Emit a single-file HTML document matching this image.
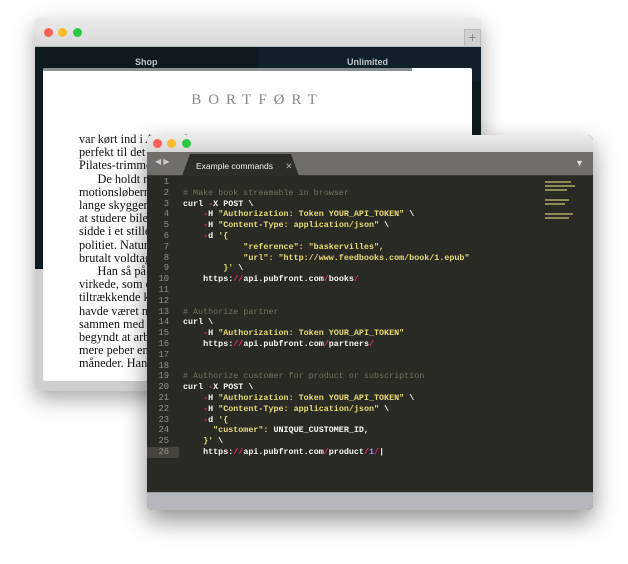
<!DOCTYPE html>
<html><head><meta charset="utf-8"><style>
*{margin:0;padding:0;box-sizing:border-box}
body{width:628px;height:564px;background:#fff;position:relative;overflow:hidden;font-family:"Liberation Sans",sans-serif}
.back{position:absolute;left:35px;top:18px;width:446px;height:373px;background:#cfcfcf;border-radius:5px;box-shadow:0 8px 22px rgba(0,0,0,.35);overflow:hidden}
.tb{height:29px;background:linear-gradient(#ececec,#d8d8d8);border-bottom:1px solid #b8b8b8;position:relative}
.dot{position:absolute;width:9px;height:9px;border-radius:50%}
.nav{position:absolute;left:0;top:29px;width:446px;height:222px;background:#0f1a1e}
.nav .r{position:absolute;left:223px;top:0;width:223px;height:35px;background:#112028}
.nav span{position:absolute;top:10px;color:#bfc5c8;font-size:9px;font-weight:bold}
.page{position:absolute;left:8px;top:50px;width:429px;height:313px;background:#fff;border-radius:2px;overflow:hidden}
.prog{position:absolute;left:0;top:0;width:369px;height:3px;background:#8a8f93}
.title{position:absolute;top:24px;width:100%;text-align:center;font-family:"Liberation Serif",serif;font-size:15px;letter-spacing:7px;color:#888}
.txt{position:absolute;left:36px;top:65px;font-family:"Liberation Serif",serif;font-size:12.3px;line-height:13.2px;color:#111;white-space:pre}
.front{position:absolute;left:147px;top:135px;width:446px;height:375px;border-radius:5px;overflow:hidden;box-shadow:0 10px 25px rgba(0,0,0,.45);background:#272822}
.ftb{height:17px;background:linear-gradient(#ececec,#d6d6d6);position:relative}
.tabs{height:24px;background:#6f6e68;position:relative;border-bottom:1px solid #3a3a34}
.tab{position:absolute;left:35px;top:2px;width:117px;height:22px;background:#2c2d27;clip-path:polygon(8px 0,109px 0,117px 22px,0 22px);color:#eee;font-size:8.5px;padding:7px 0 0 14px}
.ed{position:absolute;left:0;top:41px;width:446px;height:316px;background:#2a2a25;font-family:"Liberation Mono",monospace;font-size:8.4px;line-height:10.8px}
.ln{position:absolute;left:0;top:1px;width:22px;text-align:right;color:#8f908a;white-space:pre;font-size:8.8px}
.code{position:absolute;left:36px;top:1px;color:#f8f8f2;white-space:pre;font-weight:bold}
.c{color:#75715e;font-weight:normal}.s{color:#e6db74}.p{color:#f92672}.v{color:#ae81ff}
.status{position:absolute;left:0;bottom:0;width:446px;height:18px;background:#b4b8bc;border-top:1px solid #999}
.hl{position:absolute;left:0;top:271px;width:32px;height:11px;background:#45443c}
</style></head><body>
<div class="back">
 <div class="tb">
  <div class="dot" style="left:9px;top:10px;background:#fc5f57"></div>
  <div class="dot" style="left:23px;top:10px;background:#fdbc2e"></div>
  <div class="dot" style="left:38px;top:10px;background:#29c840"></div>
  <div style="position:absolute;right:0;top:11px;width:17px;height:18px;background:#d0d0d0;border:1px solid #bbb;color:#888;font-size:14px;line-height:15px;text-align:center">+</div>
 </div>
 <div class="nav"><div class="r"></div><span style="left:100px">Shop</span><span style="left:312px">Unlimited</span></div>
 <div class="page"><div class="prog"></div>
  <div class="title">BORTFØRT</div>
  <div class="txt">var kørt ind i Amagerbro ... 
perfekt til det s
Pilates-trimmet
      De holdt nø
motionsløbernes
lange skygger b
at studere bilen
sidde i et stilles
politiet. Naturli
brutalt voldtage
      Han så på A
virkede, som o
tiltrækkende kv
havde været ne
sammen med h
begyndt at arbe
mere peber end
måneder. Han v</div>
 </div>
</div>
<div class="front">
 <div class="ftb">
  <div class="dot" style="left:6px;top:4px;background:#fc5f57"></div>
  <div class="dot" style="left:20px;top:4px;background:#fdbc2e"></div>
  <div class="dot" style="left:35px;top:4px;background:#29c840"></div>
 </div>
 <div class="tabs">
  <span style="position:absolute;left:8px;top:5px;color:#ccc;font-size:8px">◀ ▶</span>
  <div class="tab">Example commands <span style="margin-left:10px;color:#aaa">✕</span></div>
  <span style="position:absolute;right:9px;top:6px;color:#ddd;font-size:9px">▼</span>
 </div>
 <div class="ed">
  <div class="hl"></div>
  <div class="ln">1
2
3
4
5
6
7
8
9
10
11
12
13
14
15
16
17
18
19
20
21
22
23
24
25
26</div>
<div class="code">
<span class="c"># Make book streamable in browser</span>
curl <span class="p">-</span>X POST \
    <span class="p">-</span>H <span class="s">"Authorization: Token YOUR_API_TOKEN"</span> \
    <span class="p">-</span>H <span class="s">"Content-Type: application/json"</span> \
    <span class="p">-</span>d <span class="s">'{</span>
<span class="s">            "reference": "baskervilles",</span>
<span class="s">            "url": "http://www.feedbooks.com/book/1.epub"</span>
<span class="s">        }'</span> \
    https:<span class="p">//</span>api.pubfront.com<span class="p">/</span>books<span class="p">/</span>


<span class="c"># Authorize partner</span>
curl \
    <span class="p">-</span>H <span class="s">"Authorization: Token YOUR_API_TOKEN"</span>
    https:<span class="p">//</span>api.pubfront.com<span class="p">/</span>partners<span class="p">/</span>


<span class="c"># Authorize customer for product or subscription</span>
curl <span class="p">-</span>X POST \
    <span class="p">-</span>H <span class="s">"Authorization: Token YOUR_API_TOKEN"</span> \
    <span class="p">-</span>H <span class="s">"Content-Type: application/json"</span> \
    <span class="p">-</span>d <span class="s">'{</span>
<span class="s">      "customer": </span>UNIQUE_CUSTOMER_ID,
<span class="s">    }'</span> \
    https:<span class="p">//</span>api.pubfront.com<span class="p">/</span>product<span class="p">/</span><span class="v">1</span><span class="p">/</span>|</div>
  <div style="position:absolute;right:16px;top:3px;width:32px;height:44px;opacity:.7">
   <div style="height:2px;width:26px;background:#b9b36a;margin:2px 0"></div>
   <div style="height:2px;width:30px;background:#b9b36a;margin:2px 0"></div>
   <div style="height:2px;width:22px;background:#b9b36a;margin:2px 0 8px"></div>
   <div style="height:2px;width:24px;background:#b9b36a;margin:2px 0"></div>
   <div style="height:2px;width:20px;background:#b9b36a;margin:2px 0 8px"></div>
   <div style="height:2px;width:28px;background:#b9b36a;margin:2px 0"></div>
   <div style="height:2px;width:24px;background:#b9b36a;margin:2px 0"></div>
  </div>
 </div>
 <div class="status"></div>
</div>
</body></html>
